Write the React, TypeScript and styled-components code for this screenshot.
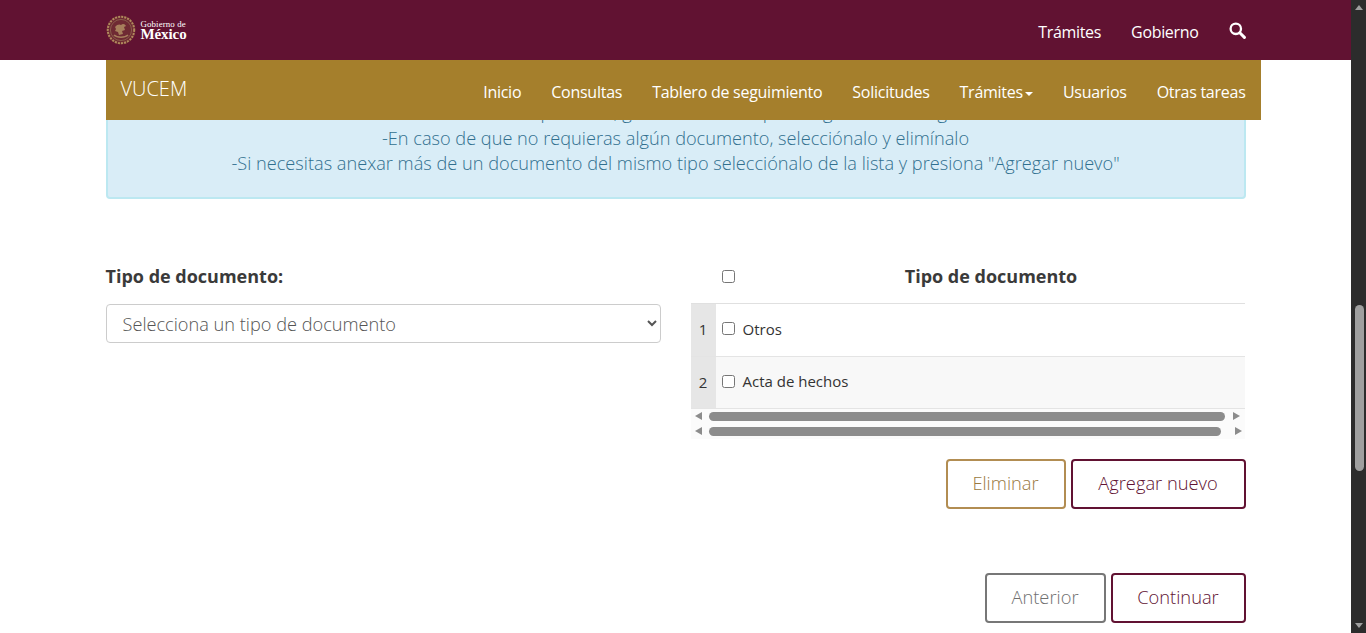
import React from "react";
import styled, { createGlobalStyle } from "styled-components";

const Global = createGlobalStyle`
  html, body { margin: 0; padding: 0; height: 633px; overflow: hidden; background: #fff; }
  body { font-family: "Open Sans", "Liberation Sans", sans-serif; font-weight: 300; color: #333; }
  * { box-sizing: border-box; }
`;

const Page = styled.div`display: flex; width: 1366px; height: 633px; overflow: hidden;`;
const Viewport = styled.div`flex: 1; min-width: 0; display: flex; flex-direction: column; overflow: hidden;`;

const TopBar = styled.header`height: 60px; flex: none; background: #611232; position: relative; z-index: 3;`;
const Container = styled.div`width: 1140px; margin: 0 auto;`;
const TopInner = styled(Container)`height: 60px; display: flex; align-items: center; justify-content: space-between;`;
const Logo = styled.div`display: flex; align-items: center; gap: 5px; margin-top: -1px;`;
const LogoText = styled.div`display: flex; flex-direction: column; font-family: "Liberation Serif", serif; color: #fff;`;
const LogoSmall = styled.span`display: block; font-size: 8.9px; line-height: 9px; font-weight: 400; letter-spacing: 0.1px;`;
const LogoBig = styled.span`display: block; font-size: 15px; line-height: 11px; font-weight: 700; letter-spacing: -0.1px;`;
const TopLinks = styled.nav`display: flex; align-items: center; gap: 30px;`;
const TopLink = styled.a`font-size: 16px; font-weight: 400; color: #fff; line-height: 22px; margin-top: 4px; letter-spacing: -0.33px;`;
const SearchButton = styled.span`display: flex; margin-top: 0;`;

const SubNavWrap = styled(Container)`flex: none; position: relative; z-index: 2;`;
const SubNav = styled.nav`width: 1155px; height: 60px; background: #a57f2c; display: flex; align-items: stretch; justify-content: space-between; padding: 0 15px;`;
const Brand = styled.span`font-size: 20px; font-weight: 300; color: #fff; line-height: 25px; padding-top: 16px;`;
const NavLinks = styled.div`display: flex; gap: 30px; padding-top: 21px;`;
const NavLink = styled.a`font-size: 16px; font-weight: 400; color: #fff; line-height: 22px; display: inline-flex; align-items: center; height: 22px; letter-spacing: -0.26px;`;
const Caret = styled.i`display: inline-block; width: 0; height: 0; margin-left: 2px; margin-top: 3px; border-top: 4px solid #fff; border-left: 4px solid transparent; border-right: 4px solid transparent;`;

const Content = styled(Container)`flex: none; margin-top: -22px; position: relative; z-index: 1;`;
const Alert = styled.div`
  background: #d9edf7; border: 2px solid #bce8f1; border-radius: 4px; color: #31708f;
  font-size: 18.18px; line-height: 25.5px; text-align: center; padding: 0 15px 20px;
`;
const AlertLine = styled.div`white-space: nowrap;`;

const Columns = styled.div`display: grid; grid-template-columns: 555px 555px; column-gap: 30px; margin-top: 52px; height: 190px;`;
const Left = styled.div`display: flex; flex-direction: column;`;
const FieldLabel = styled.label`font-size: 18px; font-weight: 700; line-height: 24px; color: #3a3a3a; margin-top: 13px; margin-bottom: 16px;`;
const Select = styled.select`
  width: 555px; height: 39px; border: 1px solid #ccc; border-radius: 4px; background: #fff; color: #555;
  font-family: inherit; font-size: 18.18px; font-weight: 300; padding: 2px 12px 0;
`;

const Grid = styled.div`width: 554px; display: flex; flex-direction: column;`;
const HeadRow = styled.div`display: flex; height: 53px; border-bottom: 1px solid #e0e0e0;`;
const NumHead = styled.div`width: 25px; flex: none;`;
const CheckCell = styled.div`width: 25px; flex: none; display: flex; align-items: center; justify-content: center; padding-left: 1px;`;
const HeadTitle = styled.div`flex: 1; text-align: center; font-size: 18px; font-weight: 700; line-height: 24px; padding-top: 13px; color: #3a3a3a; padding-right: 3px;`;
const Row = styled.div<{ $alt?: boolean }>`display: flex; height: ${p => (p.$alt ? 52 : 53)}px; background: ${p => (p.$alt ? "#f8f8f8" : "#fff")}; border-bottom: 1px solid #e4e4e4;`;
const NumCell = styled.div`width: 25px; flex: none; background: #e6e6e6; font-size: 15px; font-weight: 400; color: #333; display: flex; align-items: center; justify-content: center; padding-bottom: 1px;`;
const RowCheck = styled(CheckCell)`padding-bottom: 2px;`;
const RowText = styled.div`font-size: 15px; font-weight: 400; color: #333; padding-left: 2px; padding-bottom: 2px; display: flex; align-items: center;`;
const Box = styled.input`margin: 0; width: 13px; height: 13px;`;

const ScrollTrack = styled.div`display: flex; align-items: center; height: 15px; padding-left: 4px; background: #fbfbfb;`;
const ScrollThumb = styled.div<{ $w: number }>`flex: none; width: ${p => p.$w}px; margin-left: 7px; height: 9px; background: #8c8c8c; border-radius: 5px;`;
const ArrowLeft = styled.i`flex: none; width: 0; height: 0; border-top: 4.5px solid transparent; border-bottom: 4.5px solid transparent; border-right: 7px solid #8c8c8c;`;
const ArrowRight = styled.i<{ $gap: number }>`flex: none; width: 0; height: 0; border-top: 4.5px solid transparent; border-bottom: 4.5px solid transparent; border-left: 7px solid #8c8c8c; margin-left: ${p => p.$gap}px;`;

const Actions = styled.div<{ $top: number }>`display: flex; justify-content: flex-end; gap: 5px; margin-top: ${p => p.$top}px;`;
const Btn = styled.button<{ $color: string; $text: string; $w: number }>`
  width: ${p => p.$w}px; height: 50px; background: #fff; border: 2px solid ${p => p.$color}; border-radius: 4px;
  color: ${p => p.$text}; font-family: inherit; font-size: 18.3px; font-weight: 300; padding: 0 0 2px;
`;

const Scrollbar = styled.aside`width: 15px; flex: none; height: 633px; background: #2c2c2c; display: flex; flex-direction: column; align-items: center; position: relative; z-index: 5;`;
const BarUp = styled.i`margin-top: 5px; width: 0; height: 0; border-left: 4.5px solid transparent; border-right: 4.5px solid transparent; border-bottom: 5px solid #9f9f9f;`;
const BarThumb = styled.div`width: 9px; height: 166px; margin-top: 295px; background: #9f9f9f; border-radius: 5px; margin-left: 1px;`;
const BarDown = styled.i`margin-top: auto; margin-bottom: 5px; width: 0; height: 0; border-left: 4.5px solid transparent; border-right: 4.5px solid transparent; border-top: 5px solid #9f9f9f;`;

const Emblem = () => (
  <svg width="30" height="30" viewBox="0 0 30 30" aria-hidden="true">
    <circle cx="15" cy="15" r="14.4" fill="#6f2a33" />
    <circle cx="15" cy="15" r="13.2" fill="none" stroke="#b08a5e" strokeWidth="2" strokeDasharray="2 1.1" />
    <circle cx="15" cy="15" r="10.6" fill="none" stroke="#8f6750" strokeWidth=".8" />
    <path d="M9 12c2-3 5-3 6-2 2-2 4-1 5 1l-2 1 1 3-3 1 1 3-4 1-1-3-3-1 1-2z" fill="#a77f5c" />
    <path d="M8 20c3 3 11 3 14 0" fill="none" stroke="#a77f5c" strokeWidth="1.6" />
  </svg>
);

const SearchIcon = () => (
  <svg width="17" height="17" viewBox="0 0 17 17" aria-hidden="true">
    <circle cx="6.8" cy="6.8" r="5.2" fill="none" stroke="#fff" strokeWidth="2.3" />
    <path d="M10.8 10.8 15.4 15.4" stroke="#fff" strokeWidth="3" strokeLinecap="round" />
  </svg>
);

export default function App() {
  return (
    <Page>
      <Global />
      <Viewport>
        <TopBar>
          <TopInner>
            <Logo>
              <Emblem />
              <LogoText>
                <LogoSmall>Gobierno de</LogoSmall>
                <LogoBig>México</LogoBig>
              </LogoText>
            </Logo>
            <TopLinks>
              <TopLink>Trámites</TopLink>
              <TopLink>Gobierno</TopLink>
              <SearchButton><SearchIcon /></SearchButton>
            </TopLinks>
          </TopInner>
        </TopBar>
        <SubNavWrap>
          <SubNav>
            <Brand>VUCEM</Brand>
            <NavLinks>
              <NavLink>Inicio</NavLink>
              <NavLink>Consultas</NavLink>
              <NavLink>Tablero de seguimiento</NavLink>
              <NavLink>Solicitudes</NavLink>
              <NavLink>Trámites<Caret /></NavLink>
              <NavLink>Usuarios</NavLink>
              <NavLink>Otras tareas</NavLink>
            </NavLinks>
          </SubNav>
        </SubNavWrap>
        <Content>
          <Alert>
            <AlertLine>-Si el archivo está presente, guarda los datos para seguir con la carga</AlertLine>
            <AlertLine>-En caso de que no requieras algún documento, selecciónalo y elimínalo</AlertLine>
            <AlertLine>-Si necesitas anexar más de un documento del mismo tipo selecciónalo de la lista y presiona "Agregar nuevo"</AlertLine>
          </Alert>
          <Columns>
            <Left>
              <FieldLabel>Tipo de documento:</FieldLabel>
              <Select defaultValue="">
                <option value="">Selecciona un tipo de documento</option>
              </Select>
            </Left>
            <Grid>
              <HeadRow>
                <NumHead />
                <CheckCell><Box type="checkbox" /></CheckCell>
                <HeadTitle>Tipo de documento</HeadTitle>
              </HeadRow>
              <Row>
                <NumCell>1</NumCell>
                <RowCheck><Box type="checkbox" /></RowCheck>
                <RowText>Otros</RowText>
              </Row>
              <Row $alt>
                <NumCell>2</NumCell>
                <RowCheck><Box type="checkbox" /></RowCheck>
                <RowText>Acta de hechos</RowText>
              </Row>
              <ScrollTrack>
                <ArrowLeft /><ScrollThumb $w={516} /><ArrowRight $gap={8} />
              </ScrollTrack>
              <ScrollTrack>
                <ArrowLeft /><ScrollThumb $w={512} /><ArrowRight $gap={14} />
              </ScrollTrack>
            </Grid>
          </Columns>
          <Actions $top={18}>
            <Btn $color="#b28d52" $text="#99793f" $w={120}>Eliminar</Btn>
            <Btn $color="#611232" $text="#611232" $w={175}>Agregar nuevo</Btn>
          </Actions>
          <Actions $top={64}>
            <Btn $color="#777777" $text="#6f6f6f" $w={121}>Anterior</Btn>
            <Btn $color="#611232" $text="#611232" $w={135}>Continuar</Btn>
          </Actions>
        </Content>
      </Viewport>
      <Scrollbar>
        <BarUp />
        <BarThumb />
        <BarDown />
      </Scrollbar>
    </Page>
  );
}
